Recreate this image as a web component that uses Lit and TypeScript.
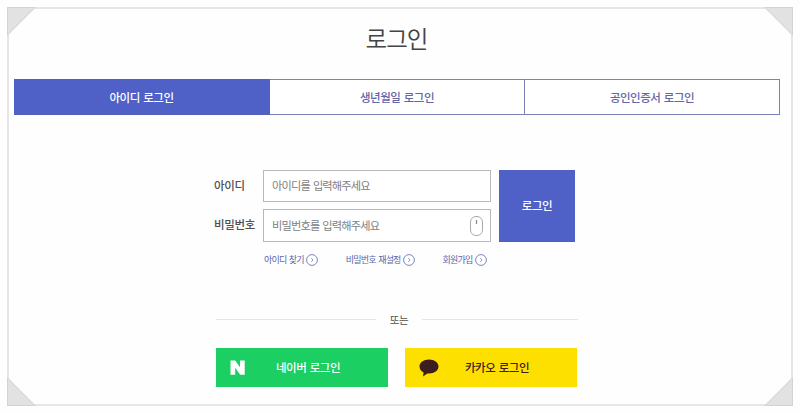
import { LitElement, html, css, svg } from "lit";
import { customElement, state } from "lit/decorators.js";

const tabs = ["아이디 로그인", "생년월일 로그인", "공인인증서 로그인"];
const links = ["아이디 찾기", "비밀번호 재설정", "회원가입"];
const corners = ["tl", "tr", "bl", "br"];

const chevron = svg`
  <circle cx="6" cy="6" r="5.4" fill="none" stroke="#6f78b5" stroke-width="0.9" />
  <path d="M5.3 4.2 L7 6 L5.3 7.8" fill="none" stroke="#6f78b5" stroke-width="0.8" />`;

@customElement("app-root")
export class AppRoot extends LitElement {
  @state() private active = 0;

  static styles = css`
    :host {
      display: block;
      width: 800px;
      height: 413px;
      overflow: hidden;
      background: #fefefe;
      font-family: "Noto Sans CJK KR", "Noto Sans", sans-serif;
      font-size: 11.5px;
      line-height: 18px;
      color: #505050;
    }
    * { box-sizing: border-box; }
    button, input { font: inherit; color: inherit; border-radius: 0; margin: 0; }
    .frame {
      position: relative;
      width: 786px;
      height: 399px;
      margin: 7px;
      border: 2px solid #e6e6e6;
      padding: 0 5px;
      display: flow-root;
    }
    .corner { position: absolute; width: 29px; height: 29px; }
    .tl { left: -2px; top: -2px; }
    .tr { right: -2px; top: -2px; transform: scaleX(-1); }
    .bl { left: -2px; bottom: -2px; transform: scaleY(-1); }
    .br { right: -2px; bottom: -2px; transform: scale(-1); }
    h1 {
      margin: 11px 0 0;
      height: 36px;
      font-size: 23.5px;
      line-height: 36px;
      font-weight: 350;
      letter-spacing: -0.9px;
      text-align: center;
      color: #444;
      padding-right: 7px;
    }
    .tabs {
      display: grid;
      grid-template-columns: 256px 255px 255px;
      height: 36px;
      width: 766px;
      margin-top: 23px;
    }
    .tab {
      border: 1px solid #7b82b5;
      border-left: 0;
      background: #fff;
      color: #6068a8;
      font-weight: 500;
      letter-spacing: -0.5px;
      word-spacing: 1.4px;
      padding: 0;
    }
    .tab.on { background: #4f61c7; color: #fff; border-color: #5360b5; }
    .content { width: 363px; margin: 55px 0 0 202px; }
    .form { display: grid; grid-template-columns: 227px 76px; column-gap: 9px; margin-left: 47px; }
    .fields { display: grid; grid-template-rows: 32px 33px; row-gap: 7px; margin-left: -47px; }
    .row { display: grid; grid-template-columns: 47px 228px; align-items: stretch; }
    label { font-weight: 500; letter-spacing: -0.3px; margin-left: -2px; line-height: 31px; white-space: nowrap; }
    .box {
      display: flex;
      align-items: center;
      border: 1px solid #b9b9b9;
      background: #fff;
      padding: 0 7px 0 8px;
    }
    input {
      flex: 1;
      min-width: 0;
      border: 0;
      outline: 0;
      padding: 0 0 2px;
      background: none;
      font-size: 11.2px;
      letter-spacing: -0.8px;
      word-spacing: 1.2px;
    }
    input::placeholder { color: #808080; opacity: 1; }
    .submit {
      border: 0;
      background: #4f61c7;
      color: #fff;
      font-weight: 500;
      letter-spacing: -0.4px;
      height: 72px;
      padding: 0 0 2px;
    }
    .links { display: flex; margin: 9px 0 0 48px; gap: 28px; height: 18px; }
    .link {
      display: flex;
      align-items: center;
      gap: 2px;
      font-size: 9px;
      letter-spacing: -0.8px;
      word-spacing: 1.2px;
      color: #5b65aa;
      white-space: nowrap;
    }
    .or { display: flex; align-items: center; width: 362px; height: 18px; margin-top: 41px; font-size: 10.5px; letter-spacing: -0.3px; }
    .or::before, .or::after { content: ""; height: 1px; background: #e5e5e5; width: 160px; }
    .or::after { width: 156px; }
    .or span { width: 46px; text-align: center; padding-top: 2px; }
    .social { display: grid; grid-template-columns: 172px 172px; gap: 17px; margin-top: 20px; }
    .social button {
      display: flex;
      align-items: center;
      height: 39px;
      border: 0;
      padding: 0 0 0 14px;
      font-weight: 500;
      letter-spacing: -0.5px;
      word-spacing: 1.4px;
    }
    .social span { padding-bottom: 2px; }
    .naver { background: #1bcf62; color: #fff; }
    .kakao { background: #fee000; color: #3c2020; }
    .social svg { flex: none; margin-right: 31px; }
    .social .kakao svg { margin-right: 26px; }
    svg { display: block; }
  `;

  render() {
    return html`
      <main class="frame">
        ${corners.map((c) => html`<svg class="corner ${c}" viewBox="0 0 29 29">
          <path d="M0 0H29L0 29Z" fill="#e2e2e2" />
          <path d="M0.5 28V0.5H28L0.5 28" fill="none" stroke="#d3d3d3" />
        </svg>`)}
        <h1>로그인</h1>
        <nav class="tabs">
          ${tabs.map((t, i) => html`<button class="tab ${i === this.active ? "on" : ""}" @click=${() => (this.active = i)}>${t}</button>`)}
        </nav>
        <section class="content">
          <div class="form">
            <div class="fields">
              <div class="row">
                <label for="uid">아이디</label>
                <div class="box"><input id="uid" placeholder="아이디를 입력해주세요" /></div>
              </div>
              <div class="row">
                <label for="pw">비밀번호</label>
                <div class="box">
                  <input id="pw" type="password" placeholder="비밀번호를 입력해주세요" />
                  <svg width="13" height="20" viewBox="0 0 13 20">
                    <rect x="0.5" y="0.5" width="12" height="19" rx="5.5" fill="none" stroke="#aaa" />
                    <path d="M6.5 4V8" stroke="#888" stroke-width="1.2" />
                  </svg>
                </div>
              </div>
            </div>
            <button class="submit">로그인</button>
          </div>
          <div class="links">
            ${links.map((l) => html`<a class="link">${l}<svg width="12" height="12" viewBox="0 0 12 12">${chevron}</svg></a>`)}
          </div>
          <div class="or"><span>또는</span></div>
          <div class="social">
            <button class="naver">
              <svg width="15" height="15" viewBox="0 0 15 15"><path d="M0.5 0.5H5.2L10 7.2V0.5H14.7V14.7H10.2L5.2 7.8V14.7H0.5Z" fill="#fff" /></svg>
              <span>네이버 로그인</span>
            </button>
            <button class="kakao">
              <svg width="20" height="18" viewBox="0 0 20 18"><path d="M10 0.5C4.6 0.5 0.5 3.5 0.5 7.5C0.5 10 2 12.1 4.6 13.4L4 17.5L8.3 14.4L10 14.5C15.4 14.5 19.5 11.5 19.5 7.5S15.4 0.5 10 0.5Z" fill="#3c1e1e" /></svg>
              <span>카카오 로그인</span>
            </button>
          </div>
        </section>
      </main>
    `;
  }
}
